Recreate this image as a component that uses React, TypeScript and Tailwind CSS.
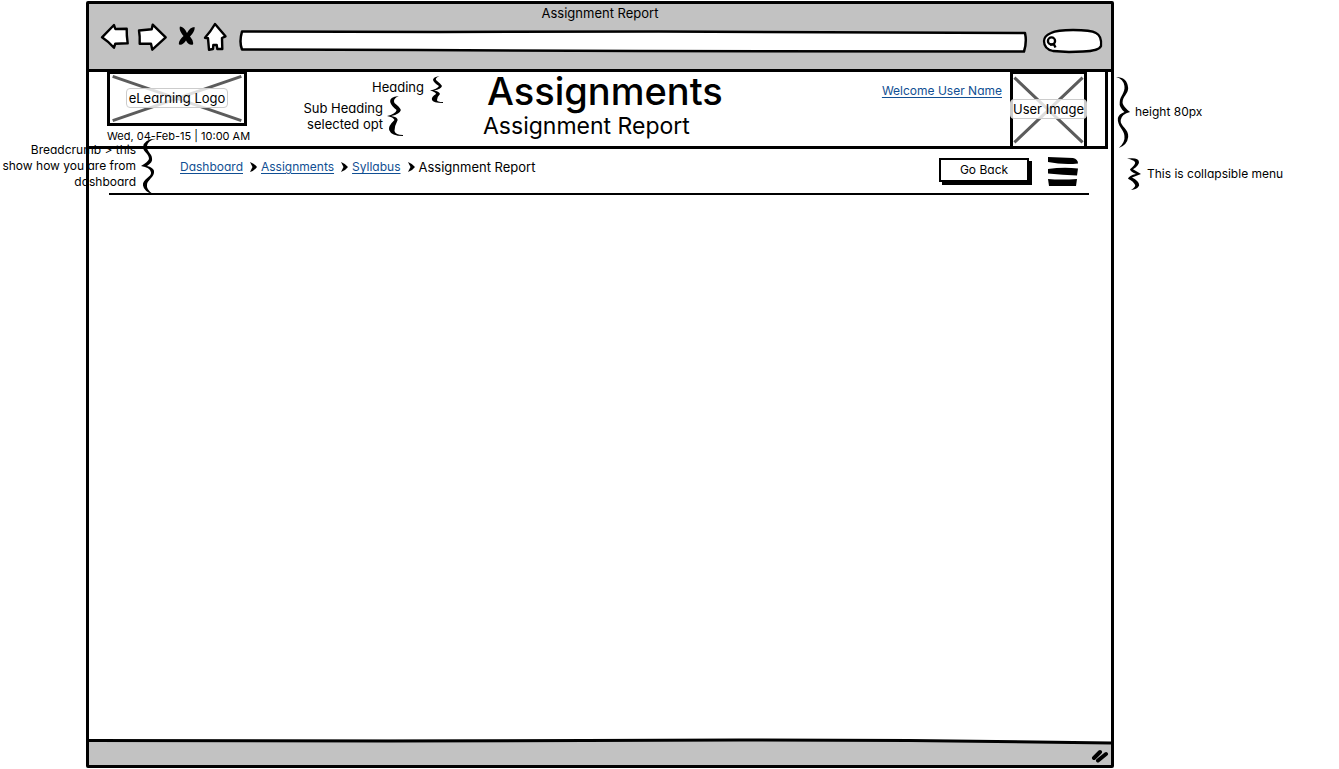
import type { ReactNode } from "react";

const LARGE_BRACE =
  "M0 1Q12 1 13 12C13 18 7 20 7 27Q8 31 15 36Q6 38 5 44C4 50 14 53 13 61Q12 69 3 72Q10 66 9 60C9 54 1 50 2 42Q3 38 9 36Q3 31 4 26C4 20 10 17 9 10Q8 3 0 1Z";
const SMALL_BRACE =
  "M0 .5Q12 -1 12 4Q12 7 6 11L14 15.5L5 19Q13 23 12 27Q10 31 4 31Q9 28 8 26Q7 23 1 20Q2 17 9 15.5Q3 13 3 11Q9 6 8 4Q7 2 0 .5Z";
const HOOKED_BRACE =
  "M9.5 0Q3 1 3 4Q4 7 9 10Q7 13 0 14.5Q6 16 6 18Q1 21 2 24Q3 27 13 27L13 26Q7 26 7 24Q7 21 10 18Q9 15 4 14.5Q11 13 12 10Q11 8 6 4Q5 2 9.5 0Z";
const TALL_HOOKED_BRACE =
  "M11 0Q2 1 3 6Q4 10 9 14Q8 18 0 20Q6 21 7 24Q1 30 2 34Q4 40 15 40L15 39Q8 39 7 35Q7 30 10 24Q10 21 4 20Q12 18 13 14Q12 11 7 7Q5 3 11 0Z";

const BRACES = {
  large: { box: "0 0 16 72", path: LARGE_BRACE },
  small: { box: "0 0 14 31", path: SMALL_BRACE },
  hooked: { box: "0 0 13 27", path: HOOKED_BRACE },
  tallHooked: { box: "0 0 15 40", path: TALL_HOOKED_BRACE },
};

function Brace({ className, kind = "large" }: { className: string; kind?: keyof typeof BRACES }) {
  return (
    <svg
      aria-hidden="true"
      viewBox={BRACES[kind].box}
      preserveAspectRatio="none"
      className={`shrink-0 ${className}`}
    >
      <path d={BRACES[kind].path} />
    </svg>
  );
}

function ToolButton({ label, className, children }: { label: string; className: string; children: ReactNode }) {
  return (
    <button type="button" aria-label={label} className={`h-7 shrink-0 ${className}`}>
      {children}
    </button>
  );
}

function Toolbar() {
  const icon = "block h-7 w-full overflow-visible fill-white stroke-black stroke-[2.4]";
  return (
    <div className="flex h-[46px] items-start gap-2.5 pl-3 pr-[9px]">
      <ToolButton label="Back" className="w-7">
        <svg viewBox="0 0 28 28" className={icon} strokeLinejoin="round">
          <path d="M1 14.3L13 2L14.3 6L25.7 5.7Q25.5 12 26.7 20.3L14.3 20.7L13 24.7Q8 19 1 14.3Z" />
        </svg>
      </ToolButton>
      <ToolButton label="Forward" className="w-7">
        <svg viewBox="1 0 28 28" className={icon} strokeLinejoin="round">
          <path d="M1 7.5L13.7 6.3L14.7 1.7L27.7 14.3L14.3 26.7L13 20.7L1.7 20.7Q2 13 1 7.5Z" />
        </svg>
      </ToolButton>
      <ToolButton label="Stop" className="w-[18px]">
        <svg viewBox="0 0 18 28" className="block h-7 w-full">
          <path d="M3 3.5Q7 3.5 10 10Q13 4 17.5 4Q18.5 8 13 13.5Q17 18 16 21.5Q12 23 9 17.5Q6 22.5 2 21.5Q1 18 6.5 13Q1.500 7 3 3.500Z" />
        </svg>
      </ToolButton>
      <ToolButton label="Home" className="w-[22px]">
        <svg viewBox="0 0 22 28" className={icon} strokeLinejoin="round">
          <path d="M10 1L20.5 13.3L17 15L17.3 26L12.3 26L11.7 22L8.3 22L8 26L4 26.7L3 15.3L0 14.7Q6 8 10 1Z" />
        </svg>
      </ToolButton>
      <div className="relative ml-0.5 mt-[7px] h-[22px] grow">
        <svg
          aria-hidden="true"
          viewBox="0 0 790 22"
          preserveAspectRatio="none"
          className="absolute inset-0 h-full w-full overflow-visible fill-white stroke-black stroke-[2.5]"
        >
          <path d="M3 1.5L200 2L420 1.5L787 3Q789 12 786 21.5L400 21L180 20L3 19.5Q0 12 3 1.5Z" strokeLinejoin="round" />
        </svg>
        <input aria-label="Address" className="relative block h-full w-full bg-transparent px-2 text-sm outline-none" />
      </div>
      <div className="relative ml-[5px] mt-1.5 h-6 w-[59px] shrink-0">
        <svg
          aria-hidden="true"
          viewBox="0 0 59 24"
          className="absolute inset-0 h-full w-full overflow-visible fill-white stroke-black stroke-[2.3]"
        >
          <path d="M8 4Q14 1 30 1Q48 1 53 4Q59 7 58 17Q56 22 40 22.5L26 23L10 22Q1 20 1 12Q1 7 8 4Z" />
          <circle cx="8.5" cy="12" r="3.6" />
          <path d="M7 15.500L11 15.500L12.500 18.500" />
        </svg>
        <input aria-label="Search" className="relative block h-full w-full bg-transparent pl-4 pr-2 text-sm outline-none" />
      </div>
    </div>
  );
}

function Placeholder({ label, className }: { label: string; className: string }) {
  return (
    <div className={`relative flex items-center justify-center border-black ${className}`}>
      <svg
        aria-hidden="true"
        viewBox="0 0 100 100"
        preserveAspectRatio="none"
        className="absolute inset-0 h-full w-full stroke-[#5c5c5c] stroke-3"
      >
        <path d="M2 5L98 95M98 5L2 95" vectorEffect="non-scaling-stroke" />
      </svg>
      <span className="relative -mx-1 -mt-0.5 rounded border border-[#cccccc] bg-white/80 px-0.5 text-[13px] leading-[18px] whitespace-nowrap">
        {label}
      </span>
    </div>
  );
}

function Crumb({ children }: { children: string }) {
  return (
    <li className="flex items-center gap-1.5">
      <a href="#" className="text-[#114f93] underline underline-offset-2">
        {children}
      </a>
      <svg aria-hidden="true" viewBox="0 0 8 10" className="h-2.5 w-2">
        <path d="M1 0Q6 2 8 5Q5 9 1 10L3.5 5Z" />
      </svg>
    </li>
  );
}

export default function App() {
  return (
    <div className="relative grid h-screen min-h-[400px] grid-cols-[86px_minmax(0,1fr)_225px] overflow-hidden bg-white py-px font-['Inter',sans-serif] text-xs leading-4 text-black [font-feature-settings:'cv11']">
      <div />
      <main className="flex flex-col rounded-xs border-3 border-black">
        <div className="border-b-3 border-black bg-[#c2c2c2]">
          <p className="flex h-[19px] items-center justify-center pb-0.5 text-[13px]">Assignment Report</p>
          <Toolbar />
        </div>

        <header className="mr-[3px] flex h-[77px] border-r-3 border-b-3 border-black pr-[18px] pl-[18px]">
          <div className="w-[154px] shrink-0">
            <Placeholder label="eLearning Logo" className="h-[54px] w-[140px] border-3 border-t-2" />
            <time dateTime="2015-02-04T10:00" className="mt-0.5 block text-[11px] leading-4 whitespace-nowrap">
              Wed, 04-Feb-15 | 10:00 AM
            </time>
          </div>
          <div className="flex w-[182px] shrink-0 flex-col items-end pt-1 text-[13px]">
            <div className="flex h-[22px] items-center gap-1.5">
              <span>Heading</span>
              <Brace kind="hooked" className="mt-1 h-[27px] w-[13px]" />
            </div>
            <div className="mr-10 flex h-9 items-center gap-1">
              <span className="text-right">
                Sub Heading
                <br />
                selected opt
              </span>
              <Brace kind="tallHooked" className="h-10 w-4" />
            </div>
          </div>
          <div className="ml-10 shrink-0">
            <h1 className="pl-1 text-[38px] leading-[39px] font-medium">Assignments</h1>
            <h2 className="text-[23px] leading-[30px]">Assignment Report</h2>
          </div>
          <div className="ml-auto flex">
            <a
              href="#"
              className="mt-[11px] mr-2 self-start whitespace-nowrap text-[#114f93] underline underline-offset-2"
            >
              Welcome User Name
            </a>
            <Placeholder label="User Image" className="w-[77px] border-x-3 border-t-2" />
          </div>
        </header>

        <div className="ml-5 mr-[22px] flex h-[46px] items-start border-b-2 border-black">
          <nav aria-label="Breadcrumb" className="mt-2.5 ml-[71px]">
            <ol className="flex items-center gap-1">
              <Crumb>Dashboard</Crumb>
              <Crumb>Assignments</Crumb>
              <Crumb>Syllabus</Crumb>
              <li className="text-[13px]">Assignment Report</li>
            </ol>
          </nav>
          <button
            type="button"
            className="mt-[9px] ml-auto h-6 w-[90px] border-2 border-black bg-white shadow-[3px_3px_0_#000]"
          >
            Go Back
          </button>
          <button type="button" aria-label="Menu" className="mt-2 mr-2.5 ml-[18px] h-[30px] w-8">
            <svg viewBox="0 0 32 30" className="block h-full w-full">
              <path d="M1 0L26 1Q31 2 31 6.5Q16 8 1 5ZM1 12Q16 10 31 11.500L30 18.500Q16 18 1 16.5ZM1 22Q14 23 30 22L29 29L2 29Z" />
            </svg>
          </button>
        </div>

        <section className="grow" />

        <footer className="h-[26px]">
          <svg
            aria-hidden="true"
            viewBox="0 0 1022 4"
            preserveAspectRatio="none"
            className="block h-1 w-full overflow-visible"
          >
            <path d="M0 1L650 0L820 1L1022 4V5H0Z" className="fill-[#c2c2c2]" />
            <path d="M0 1.5L300 2L650 1L820 1.5L1022 4" className="fill-none stroke-black stroke-3" />
          </svg>
          <div className="flex h-[22px] items-center justify-end bg-[#c2c2c2] pr-0.5">
            <svg aria-hidden="true" viewBox="0 0 18 14" className="mt-1 h-3.5 w-[18px]" strokeLinecap="round">
              <path d="M3 9L9 3M7 11.5L15 5" className="fill-none stroke-black stroke-4" />
            </svg>
          </div>
        </footer>
      </main>

      <aside className="pt-[75px]">
        <div className="flex h-[72px] items-center gap-1 pl-0.5">
          <Brace className="h-[72px] w-[15px]" />
          <p>height 80px</p>
        </div>
        <div className="mt-2.5 flex h-8 items-center gap-1.5 pl-[13px]">
          <Brace kind="small" className="h-8 w-3.5" />
          <p>This is collapsible menu</p>
        </div>
      </aside>

      <div className="absolute top-[138px] left-0 flex w-[156px] items-center justify-end gap-1">
        <p className="text-right whitespace-nowrap">
          Breadcrumb &gt; this
          <br />
          show how you are from
          <br />
          dashboard
        </p>
        <Brace className="h-14 w-4 -scale-x-100" />
      </div>
    </div>
  );
}
